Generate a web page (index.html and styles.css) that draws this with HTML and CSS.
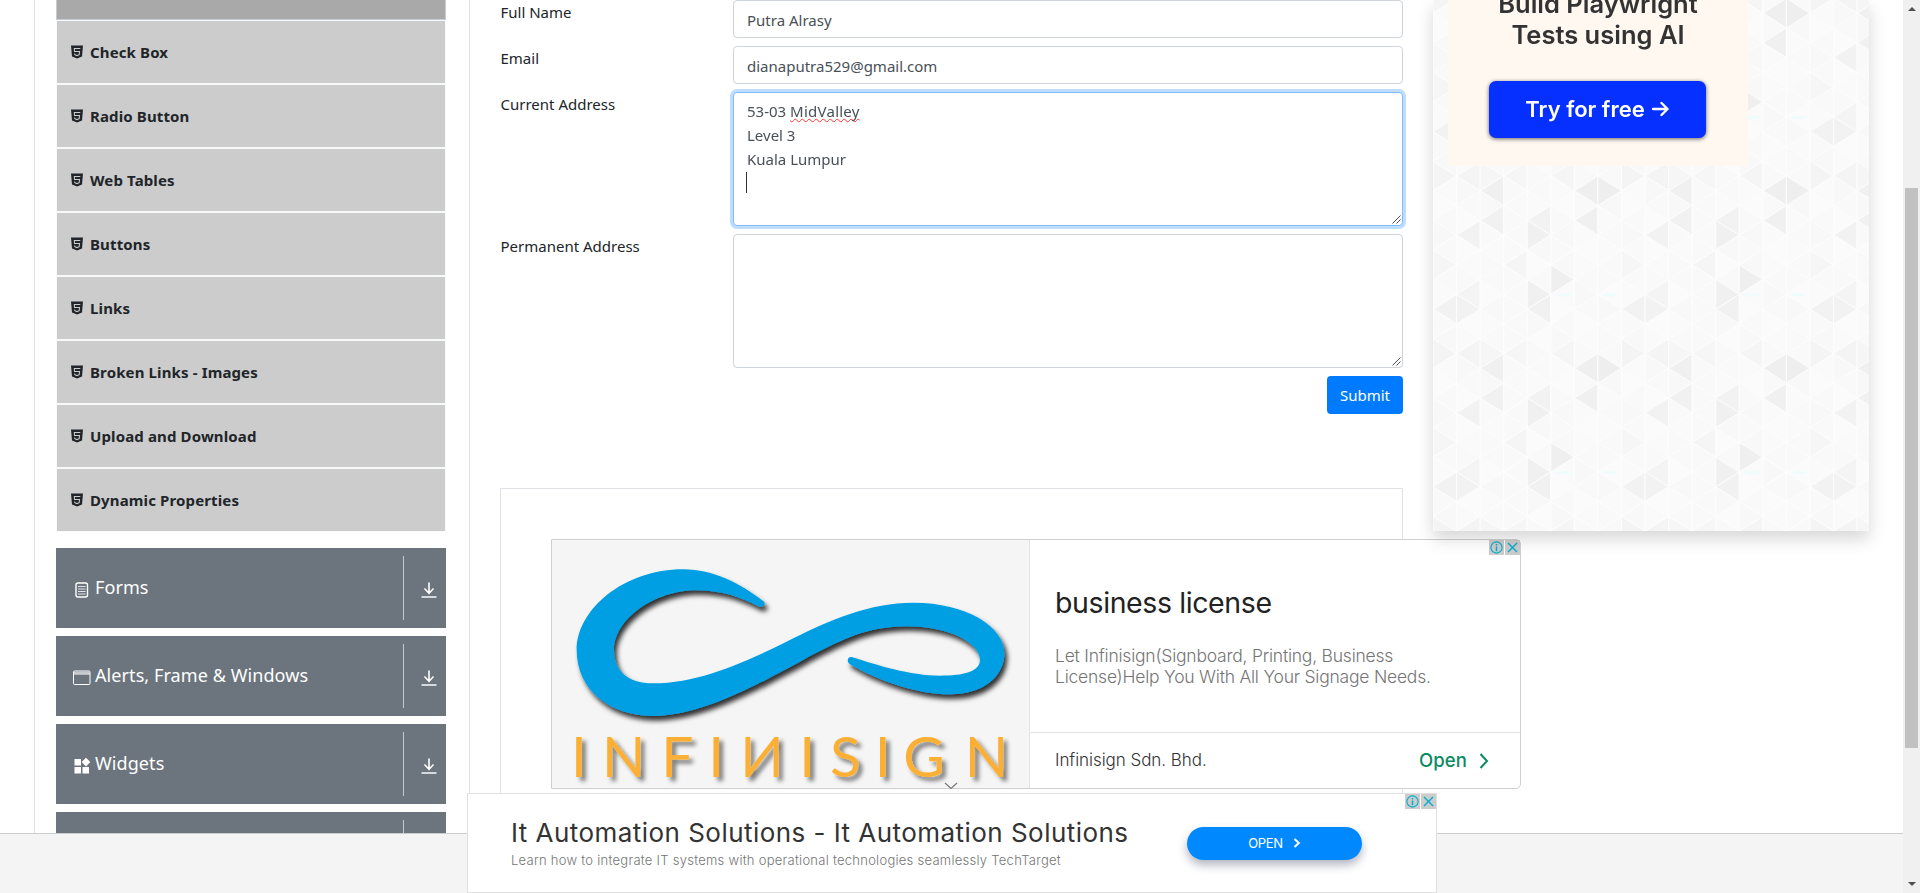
FILE: index.html
```html
<!DOCTYPE html>
<html lang="en">
<head>
<meta charset="utf-8">
<title>Text Box</title>
<link rel="stylesheet" href="styles.css">
</head>
<body>
<svg class="defs" width="0" height="0" aria-hidden="true">
  <symbol id="html5" viewBox="0 0 12 14"><path d="M0 .5h12l-1 11.100L6 13.600l-5-2z" fill="#212529"/><path d="M9.300 3.500H3.300l.2 3h5l-.3 3.200-2.200.9-2.200-.9-.1-1.200" fill="none" stroke="#ccc" stroke-width="1.050"/></symbol>
  <symbol id="down" viewBox="0 0 16 17"><path d="M8 .5v11M3.500 6.500 8 11.300l4.500-4.800" fill="none" stroke="#fff" stroke-width="1.600"/><path d="M.5 15h15" stroke="#e3e5e7" stroke-width="1.800"/></symbol>
  <symbol id="adinfo" viewBox="0 0 15 15"><path d="M0 0h15v15H0z" fill="#ccc"/><circle cx="7.500" cy="7.500" r="5.600" fill="none" stroke="#00aecd" stroke-width="1.100"/><path d="M7.500 6.500v4.700M7.500 4v1.400" stroke="#00aecd" stroke-width="1.500"/></symbol>
  <symbol id="adclose" viewBox="0 0 15 15"><path d="M0 0h15v15H0z" fill="#ccc"/><path d="m3 3 9 9M12 3l-9 9" stroke="#00aecd" stroke-width="1.400"/></symbol>
  <symbol id="grip" viewBox="0 0 9 9"><path d="M.5 8.500 8.500.5M4.500 8.500l4-4" stroke="#555" stroke-width="1"/></symbol>
</svg>
<div class="window">
  <div class="page">
    <div class="columns">
      <aside class="sidebar">
        <ul class="menu">
          <li class="item active"></li>
          <li class="item"><svg class="html5"><use href="#html5"/></svg><span>Check Box</span></li>
          <li class="item"><svg class="html5"><use href="#html5"/></svg><span>Radio Button</span></li>
          <li class="item"><svg class="html5"><use href="#html5"/></svg><span>Web Tables</span></li>
          <li class="item"><svg class="html5"><use href="#html5"/></svg><span>Buttons</span></li>
          <li class="item"><svg class="html5"><use href="#html5"/></svg><span>Links</span></li>
          <li class="item"><svg class="html5"><use href="#html5"/></svg><span>Broken Links - Images</span></li>
          <li class="item"><svg class="html5"><use href="#html5"/></svg><span>Upload and Download</span></li>
          <li class="item"><svg class="html5"><use href="#html5"/></svg><span>Dynamic Properties</span></li>
        </ul>
        <div class="group">
          <div class="group-title"><svg class="gicon" viewBox="0 0 18 18"><rect x="3" y="2" width="11.500" height="14" rx="2" fill="none" stroke="#fff" stroke-width="1.400"/><path d="M5 5.500h7.500M5 8h7.500M5 10.500h7.500M5 13h7.500" stroke="#e0e3e5" stroke-width="1.100"/></svg><span>Forms</span></div>
          <div class="group-arrow"><svg class="down"><use href="#down"/></svg></div>
        </div>
        <div class="group">
          <div class="group-title"><svg class="gicon" viewBox="0 0 18 18"><rect x=".5" y="2" width="16.500" height="13.500" rx="1" fill="none" stroke="#fff"/><path d="M1 3.500h16" stroke="#c5c9cd" stroke-width="2"/><path d="M1 5h16" stroke="#fff"/></svg><span>Alerts, Frame &amp; Windows</span></div>
          <div class="group-arrow"><svg class="down"><use href="#down"/></svg></div>
        </div>
        <div class="group">
          <div class="group-title"><svg class="gicon" viewBox="0 0 18 18"><path d="M1.500 2h6.500v6.500H1.500zM1.500 10h6.500v6.500H1.500zM9.500 10H16v6.500H9.500zM13 .8l4.300 4.300L13 9.400 8.700 5.100z" fill="#fff"/></svg><span>Widgets</span></div>
          <div class="group-arrow"><svg class="down"><use href="#down"/></svg></div>
        </div>
        <div class="group">
          <div class="group-title"></div>
          <div class="group-arrow"></div>
        </div>
      </aside>
      <main class="main">
        <div class="row"><div class="label">Full Name</div><div class="field">Putra Alrasy</div></div>
        <div class="row"><div class="label">Email</div><div class="field">dianaputra529@gmail.com</div></div>
        <div class="row"><div class="label">Current Address</div>
          <div class="field area focus"><div>53-03 <span class="typo">MidValley</span></div><div>Level 3</div><div>Kuala Lumpur</div><div class="caret"></div><svg class="grip"><use href="#grip"/></svg></div>
        </div>
        <div class="row"><div class="label">Permanent Address</div><div class="field area"><svg class="grip"><use href="#grip"/></svg></div></div>
        <div class="actions"><button class="submit">Submit</button></div>
        <div class="output">
          <section class="ad">
            <svg class="logo" viewBox="36 30 1431 744">
              <defs>
                <filter id="soft" x="-10%" y="-10%" width="125%" height="130%"><feDropShadow dx="9" dy="14" stdDeviation="8" flood-color="#000" flood-opacity=".8"/></filter>
                <filter id="softText" x="-10%" y="-20%" width="125%" height="150%"><feDropShadow dx="12" dy="12" stdDeviation="7" flood-color="#000" flood-opacity=".5"/></filter>
              </defs>
              <path filter="url(#soft)" fill="#049fe4" d="M672 215C600 160 520 118 430 118C250 118 110 240 110 360C110 480 210 558 340 558C480 558 640 470 780 395C900 330 980 289 1100 289C1230 289 1320 340 1320 390C1320 425 1270 437 1200 437C1110 437 1010 405 935 381C922 379 920 396 928 401C1010 450 1130 493 1230 493C1330 493 1393 440 1393 370C1393 290 1280 218 1120 218C990 218 870 270 760 325C620 395 480 460 340 460C260 460 222 420 222 360C222 270 340 181 470 181C540 181 600 200 655 229C670 233 678 222 672 215Z"/>
              <g filter="url(#softText)" class="wordmark">
                <text y="740" x="93 186 364 505">INFI</text>
                <text transform="translate(731 740) scale(-1 1)">N</text>
                <text y="740" x="778 870 1004 1090 1274">ISIGN</text>
              </g>
            </svg>
            <div class="ad-body">
              <div class="ad-top">
                <div class="badges"><svg><use href="#adinfo"/></svg><svg><use href="#adclose"/></svg></div>
                <h2>business license</h2>
                <p>Let Infinisign(Signboard, Printing, Business<br>License)Help You With All Your Signage Needs.</p>
              </div>
              <div class="ad-foot"><span class="advertiser">Infinisign Sdn. Bhd.</span><span class="open">Open</span><svg class="chev" viewBox="0 0 10 16"><path d="m1.500 1 6.500 7-6.500 7" fill="none" stroke="#0b8a63" stroke-width="2"/></svg></div>
            </div>
          </section>
        </div>
      </main>
      <aside class="right">
        <div class="card">
          <svg class="pattern" width="436" height="531" id="pattern"></svg>
          <div class="promo">
            <div class="promo-title"><span>Build Playwright</span><br><span>Tests using AI</span></div>
            <div class="promo-btn"><span>Try for free</span><svg viewBox="0 0 18 16"><path d="M1 8h14.500M9.500 2l6 6-6 6" fill="none" stroke="#fff" stroke-width="2.400" stroke-linecap="round" stroke-linejoin="round"/></svg></div>
          </div>
        </div>
      </aside>
    </div>
    <footer class="footer"></footer>
  </div>
  <div class="scroll"><div class="up"></div><div class="thumb"></div><div class="dn"></div></div>
</div>
<div class="banner">
  <svg class="collapse" viewBox="0 0 14 8"><path d="m1 1 6 5.500L13 1" fill="none" stroke="#777" stroke-width="1.200"/></svg>
  <div class="banner-text">
    <div class="banner-title">It Automation Solutions - It Automation Solutions</div>
    <div class="banner-sub">Learn how to integrate IT systems with operational technologies seamlessly TechTarget</div>
  </div>
  <div class="banner-btn"><span>OPEN</span><svg viewBox="0 0 8 10"><path d="m1.500 1 4.300 4-4.300 4" fill="none" stroke="#fff" stroke-width="2"/></svg></div>
  <div class="badges"><svg><use href="#adinfo"/></svg><svg><use href="#adclose"/></svg></div>
</div>
<script src="pattern.js"></script>
</body>
</html>
```
FILE: styles.css
```css
* { box-sizing: border-box; }
body { margin: 0; background: #fff; color: #212529; font-family: "Noto Sans", "Open Sans", sans-serif; font-size: 15px; line-height: 24px; overflow: hidden; }
svg { display: block; flex: none; }
.defs { position: absolute; }
.window { display: flex; width: 1920px; height: 893px; overflow: hidden; }
.page { width: 1903px; height: 893px; display: flex; flex-direction: column; }
.columns { display: flex; height: 833px; overflow: hidden; padding-left: 34px; flex: none; }
.footer { height: 60px; background: #f4f4f4; border-top: 1px solid #ccc; }

.sidebar { width: 435px; flex: none; border-left: 1px solid #dee2e6; padding: 0 23px 0 21px; }
.menu { list-style: none; margin: 0 0 16px; padding: 0; }
.item { height: 64px; border: 1px solid #f8f9fa; background: #ccc; display: flex; align-items: center; padding: 0 0 0 14px; font-weight: 700; letter-spacing: .13px; }
.item.active { height: 20px; background: #a9a9a9; border-color: #c6ccd3; border-top: 0; }
.html5 { width: 12px; height: 14px; margin-right: 7px; }
.group { height: 80px; margin-bottom: 8px; background: #6c757d; color: #fff; display: flex; padding: 8px 0; }
.group-title { display: flex; align-items: center; width: 347px; padding: 0 0 2px 17px; font-size: 18px; letter-spacing: .08px; }
.gicon { width: 18px; height: 18px; margin: 5px 4px 0 0; }
.group-arrow { width: 43px; height: 64px; border-left: 1px solid #c4c8cb; display: flex; justify-content: center; align-items: center; padding: 4px 0 0 7px; }
.down { width: 16px; height: 17px; }

.main { width: 964px; flex: none; border-left: 1px solid #dee2e6; padding: 0 30px 0 30px; }
.row { display: flex; margin-bottom: 8px; }
.label { width: 233px; flex: none; padding-left: .5px; }
.field { width: 670px; height: 38px; border: 1px solid #ced4da; border-radius: 4px; padding: 7px 13px; color: #495057; background: #fff; }
.area { height: 134px; position: relative; padding-top: 6px; }
.focus { border-color: #80bdff; box-shadow: 0 0 0 3px #bfdeff; }
.typo { text-decoration: underline wavy #f33 1px; text-underline-offset: 1px; text-decoration-skip-ink: none; letter-spacing: .25px; }
.caret { width: 1px; height: 21px; background: #333; margin: 1px 0 0 -1px; }
.grip { position: absolute; right: 1px; bottom: 1px; width: 9px; height: 9px; }
.actions { display: flex; justify-content: flex-end; }
.submit { width: 76px; height: 38px; border: 0; border-radius: 4px; background: #007bff; color: #fff; font: 15px/24px "Noto Sans", sans-serif; padding: 0; }
.output { margin-top: 74px; border: 1px solid #dee2e6; width: 903px; height: 400px; padding: 50px; }

.ad { width: 970px; height: 250px; border: 1px solid #d0d0d0; border-radius: 0 5px 5px 0; display: flex; background: #fff; font-family: Inter, sans-serif; font-weight: 300; }
.logo { width: 478px; height: 248px; background: #f5f5f5; border-right: 1px solid #e3e3e3; }
.wordmark { font: 400 171px Lato, sans-serif; fill: #fbb034; }
.ad-body { width: 490px; display: flex; flex-direction: column; }
.badges { display: flex; gap: 1px; height: 15px; }
.badges svg { width: 15px; height: 15px; }
.ad-top { height: 193px; border-bottom: 1px solid #e3e3e3; padding-left: 25px; }
.ad-top .badges { justify-content: flex-end; }
h2 { margin: 28px 0 0; font-weight: 400; font-size: 28.500px; line-height: 40px; color: #222; letter-spacing: -.4px; }
.ad p { margin: 22px 0 0; font-size: 17.500px; line-height: 21px; color: #757575; letter-spacing: -.22px; white-space: nowrap; }
.ad-foot { flex: 1; display: flex; align-items: center; padding: 0 31px 2px 25px; font-size: 17px; color: #333; }
.advertiser { flex: 1; letter-spacing: -.05px; }
.open { color: #0b8a63; font-weight: 500; font-size: 18.500px; letter-spacing: .1px; margin-right: 12px; }
.chev { width: 10px; height: 16px; margin-top: 2px; }

.right { width: 436px; flex: none; }
.card { height: 531px; position: relative; box-shadow: 0 8px 16px rgba(0,0,0,.16); background: #f9f9f9; }
.pattern { position: absolute; left: 0; top: 0; }
.promo { position: relative; width: 300px; height: 166px; margin-left: 15px; background: #fef8f1; overflow: hidden; display: flex; flex-direction: column; align-items: center; font-family: Inter, sans-serif; }
.promo-title { height: 81px; margin-top: -12px; text-align: center; font-size: 25.500px; line-height: 31px; font-weight: 600; color: #333; flex: none; white-space: nowrap; }
.promo-btn { width: 217px; height: 57px; margin: 12px 1px 0 0; border-radius: 7px; background: #0530ff; box-shadow: 0 1px 4px rgba(0,0,0,.6); display: flex; align-items: center; justify-content: center; gap: 7px; color: #fff; font-size: 22px; font-weight: 600; padding-bottom: 2px; }
.promo-btn svg { width: 18px; height: 16px; }

.scroll { width: 17px; height: 893px; background: #f0f0f0; display: flex; flex-direction: column; align-items: center; padding: 7px 0 7px; }
.up, .dn { width: 0; height: 0; border: 4px solid transparent; border-top: 0; border-bottom: 4px solid #505050; }
.thumb { width: 13px; height: 560px; margin-top: 177px; background: #c1c1c1; }
.dn { margin-top: auto; border-bottom: 0; border-top: 4px solid #505050; }

.banner { position: absolute; left: 467px; top: 793px; width: 970px; height: 100px; background: #fff; border: 1px solid #e0e0e0; display: flex; font-family: Inter, sans-serif; }
.banner-text { width: 719px; padding: 23px 0 0 43px; white-space: nowrap; }
.banner-title { font-size: 26px; line-height: 32px; color: #333; letter-spacing: .46px; }
.banner-sub { font-size: 13px; line-height: 18px; margin-top: 2px; color: #757575; font-weight: 300; letter-spacing: .27px; }
.banner-btn { width: 175px; height: 33px; margin-top: 33px; padding-bottom: 2px; border-radius: 17px; background: #0088ff; box-shadow: 0 5px 10px rgba(60,70,100,.4); color: #fff; font-size: 13px; display: flex; align-items: center; justify-content: center; gap: 10px; }
.banner-btn span { letter-spacing: -.3px; }
.banner-btn svg { width: 8px; height: 10px; }
.banner > .badges { margin-left: auto; }
.collapse { position: absolute; left: 476px; top: -12px; width: 14px; height: 8px; }
```
FILE: pattern.js
```js
// Triangular lattice: 8 columns by 12 half rows per tile.
const W = 23.56, H = 14.8, X0 = 0, Y0 = 250;
const tones = {
  "5,2": "#efefef", "4,3": "#f0f0f0", "4,4": "#f1f1f1", "0,4": "#f2f2f2", "1,4": "#f2f2f2",
  "1,3": "#f4f4f4", "6,8": "#efefef", "7,8": "#eeeeee", "2,8": "#f0f0f0", "2,10": "#f1f1f1",
  "4,10": "#f2f2f2", "6,10": "#f0f0f0", "4,11": "#f0f0f0", "1,11": "#f2f2f2",
  "0,7": "#f4f4f4", "1,7": "#f4f4f4", "2,7": "#f6f6f6", "5,7": "#f5f5f5", "3,7": "#f6f6f6", "3,1": "#f5f5f5", "0,1": "#f6f6f6"
};
const pale = ["#f9f9f9", "#fafafa", "#f8f8f8", "#fbfbfb", "#f9f9f9"];
let out = "";
for (let v = -18; v < 20; v++) {
  for (let c = 0; c < 19; c++) {
    const tc = c % 8, tv = ((v % 12) + 12) % 12;
    const tone = tones[tc + "," + tv] || pale[(tc * 3 + tv * 7 + tc * tv) % 5];
    const y = Y0 + v * H, l = X0 + c * W, r = l + W;
    const points = tv % 2 === tc % 2
      ? `${l},${y} ${r},${y - H} ${r},${y + H}`
      : `${r},${y} ${l},${y - H} ${l},${y + H}`;
    out += `<polygon points="${points}" fill="${tone}" stroke="#fdfdfd" stroke-width="1"/>`;
  }
}
for (let ty = -1; ty < 2; ty++)
  for (let tx = 0; tx < 3; tx++)
    for (const dx of [131, 177])
      out += `<ellipse cx="${dx + tx * 188.5}" cy="${295 + ty * 177.6}" rx="8" ry="1.5" fill="#effcfc"/>`;
document.getElementById("pattern").innerHTML = out;
```
